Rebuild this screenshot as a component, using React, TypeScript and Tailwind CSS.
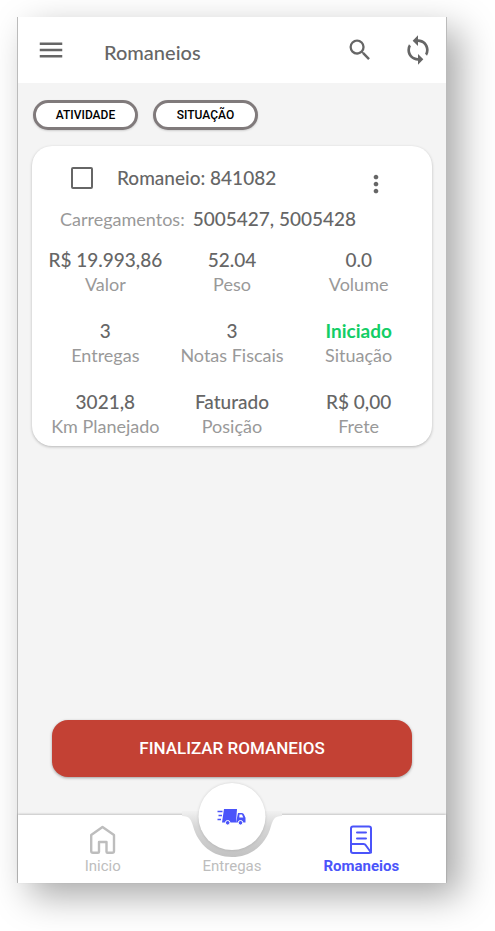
import { useState } from "react";
import { MdMenu, MdMoreVert, MdSearch, MdSync } from "react-icons/md";

// --- Data ---

const filters = ["ATIVIDADE", "SITUAÇÃO"];

const details = [
  { value: "R$ 19.993,86", label: "Valor" },
  { value: "52.04", label: "Peso" },
  { value: "0.0", label: "Volume" },
  { value: "3", label: "Entregas" },
  { value: "3", label: "Notas Fiscais" },
  { value: "Iniciado", label: "Situação", color: "font-bold text-[#13ce66]" },
  { value: "3021,8", label: "Km Planejado" },
  { value: "Faturado", label: "Posição" },
  { value: "R$ 0,00", label: "Frete" },
];

// --- Icons ---

const HomeIcon = () => (
  <svg width="28" height="30" viewBox="0 0 28 30" fill="none" stroke="currentColor" strokeWidth="2.4" strokeLinejoin="round">
    <path d="M13.500 2 25 10v16a1.800 1.800 0 0 1-1.800 1.800H18.500a1 1 0 0 1-1-1V17h-7.500v9.800a1 1 0 0 1-1 1H4a1.800 1.800 0 0 1-1.800-1.800V10Z" />
  </svg>
);

const DocumentIcon = () => (
  <svg width="24" height="30" viewBox="0 0 24 30" fill="none" stroke="currentColor" strokeWidth="2" strokeLinecap="round" strokeLinejoin="round">
    <rect x="2" y="1.500" width="20" height="26.500" rx="2" />
    <path d="M8 7.500h9M8 13.500h9M2 19h12.500c1.500 0 2 .8 2.800 2l4.700 6.500" />
  </svg>
);

const TruckIcon = () => (
  <svg width="30" height="18" viewBox="0 0 30 18" fill="#4b54fa">
    <path d="M1 3.500h5M2 7.500h3.500M1 11.500h3.500" stroke="#4b54fa" strokeWidth="1.500" fill="none" />
    <path d="M7.500 1h13L19.500 14.500H5.500Z" />
    <path d="M21.500 5h4q1.500 0 2 1.500l1.500 3.200v4.800H19.500Z" />
    <path d="M23 6.500h2.500l1.300 3h-4Z" fill="#fff" />
    <circle cx="11.200" cy="14.800" r="2.300" stroke="#fff" strokeWidth="1" />
    <circle cx="24" cy="14.800" r="2.300" stroke="#fff" strokeWidth="1" />
  </svg>
);

const NotchShape = () => (
  <svg className="absolute left-1/2 -top-1 -translate-x-1/2" width="112" height="48" viewBox="0 0 112 48">
    <defs>
      <linearGradient id="notch" x1="0" y1="0" x2="0" y2="1">
        <stop offset="0" stopColor="#f1f1f1" />
        <stop offset="0.35" stopColor="#d6d6d6" />
        <stop offset="1" stopColor="#c2c2c2" />
      </linearGradient>
    </defs>
    <path d="M6 0v5c8 0 9 4 11 10 5 19 20 31 39 31s34-12 39-31c2-6 3-10 11-10V0Z" fill="url(#notch)" />
  </svg>
);

// --- Sections ---

const TopBar = () => (
  <header className="flex h-[66px] items-center bg-white pl-[18px] pr-3 text-[#666]">
    <button aria-label="Menu">
      <MdMenu size={30} />
    </button>
    <h1 className="ml-[38px] mt-1 text-xl font-medium">Romaneios</h1>
    <div className="ml-auto flex items-center gap-7">
      <button aria-label="Buscar">
        <MdSearch size={28} />
      </button>
      <button aria-label="Atualizar">
        <MdSync size={32} />
      </button>
    </div>
  </header>
);

const RomaneioCard = () => {
  const [checked, setChecked] = useState(false);

  return (
    <section className="mx-[14px] mt-4 rounded-[20px] bg-white pb-2 pt-4 shadow-[0_1px_3px_rgba(0,0,0,0.25)]">
      <div className="flex items-start pl-[39px] pr-[42px]">
        <label className="flex items-center gap-6 text-[19px] leading-8 font-medium text-[#666]">
          <input
            type="checkbox"
            checked={checked}
            onChange={(e) => setChecked(e.target.checked)}
            className="size-[22px] appearance-none rounded-xs border-2 border-[#666] checked:bg-[#666]"
          />
          Romaneio: 841082
        </label>
        <button aria-label="Mais opções" className="ml-auto mt-2 text-[#666]">
          <MdMoreVert size={28} />
        </button>
      </div>
      <p className="mt-[9px] pl-7 text-[19px] leading-6 font-medium text-[#666]">
        <span className="mr-2 text-lg leading-6 font-normal text-[#999]">Carregamentos:</span>
        5005427, 5005428
      </p>
      <dl className="mt-[17px] grid grid-cols-3 gap-y-[23px] px-[10px] text-center">
        {details.map((item) => (
          <div key={item.label} className="flex flex-col-reverse">
            <dt className="text-lg leading-6 whitespace-nowrap text-[#999]">{item.label}</dt>
            <dd className={`text-[19px] leading-6 whitespace-nowrap ${item.color ?? "font-medium text-[#666]"}`}>{item.value}</dd>
          </div>
        ))}
      </dl>
    </section>
  );
};

const BottomNav = () => (
  <nav className="relative grid h-[68px] grid-cols-3 bg-white px-5 font-['Roboto',sans-serif] text-[15px] leading-[22px] text-[#bdbdbd] shadow-[0_-1px_2px_rgba(0,0,0,0.2)]">
    <NotchShape />
    <a href="#inicio" className="flex flex-col items-center pt-[10px]">
      <HomeIcon />
      Inicio
    </a>
    <a href="#entregas" className="relative flex flex-col items-center justify-end pb-[6px]">
      <span className="absolute left-1/2 -top-8 flex size-[67px] -translate-x-1/2 items-center justify-center rounded-full bg-white shadow-[0_0_3px_rgba(0,0,0,0.15)]">
        <TruckIcon />
      </span>
      Entregas
    </a>
    <a href="#romaneios" className="flex flex-col items-center pt-[10px] font-bold text-[#4b54fa]">
      <DocumentIcon />
      Romaneios
    </a>
  </nav>
);

export default function App() {
  return (
    <div className="flex min-h-screen bg-white pb-12 pl-[17px] pr-12 pt-[17px] font-['Lato',sans-serif]">
      <div className="flex flex-1 flex-col border-x border-[#bbb] bg-[#f4f4f4] shadow-[13px_13px_34px_rgba(0,0,0,0.34)]">
        <TopBar />
        <main className="flex flex-1 flex-col">
          <div className="mt-[17px] flex gap-[15px] px-[15px] font-['Roboto',sans-serif]">
            {filters.map((name) => (
              <button
                key={name}
                className="h-[30px] w-[105px] rounded-full border-3 border-[#807a7b] bg-white text-xs font-medium text-black shadow-[0_1px_2px_rgba(0,0,0,0.15)]"
              >
                {name}
              </button>
            ))}
          </div>
          <RomaneioCard />
          <button className="mx-[34px] mb-[38px] mt-auto h-[57px] rounded-2xl bg-[#c34134] font-['Roboto',sans-serif] text-[17px] font-medium text-white shadow-[0_1px_3px_rgba(0,0,0,0.35)]">
            FINALIZAR ROMANEIOS
          </button>
        </main>
        <BottomNav />
      </div>
    </div>
  );
}
